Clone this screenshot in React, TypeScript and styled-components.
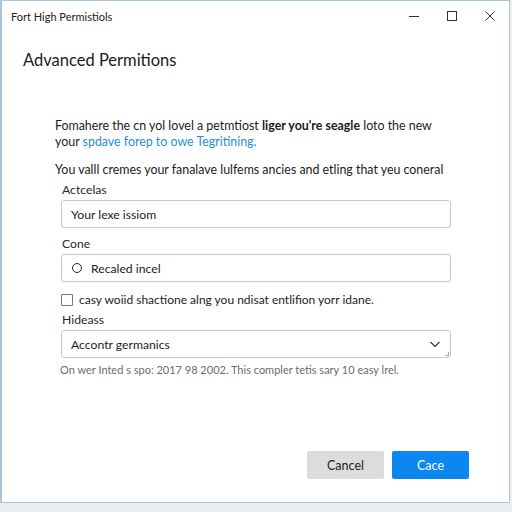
import React from "react";
import styled, { createGlobalStyle } from "styled-components";

const Global = createGlobalStyle`
  html, body { margin: 0; padding: 0; background: #eef0f2; }
  body { font-family: Lato, "Noto Sans", "Liberation Sans", sans-serif; color: #1b1b1b; }
`;

const Screen = styled.div`
  width: 512px;
  height: 512px;
  background: #eceef0;
  box-sizing: border-box;
  padding-right: 2px;
  padding-bottom: 9px;
  display: flex;
`;

const Window = styled.div`
  flex: 1;
  min-width: 0;
  background: #ffffff;
  border: 1px solid #a8c6da;
  border-left-width: 2px;
  display: flex;
  flex-direction: column;
  box-sizing: border-box;
`;

const TitleBar = styled.div`
  height: 30px;
  display: flex;
  align-items: center;
  padding-left: 9px;
`;

const TitleText = styled.div`
  flex: 1;
  font-size: 11px;
  color: #222;
`;

const Controls = styled.div`
  display: flex;
  align-items: center;
`;

const CtrlBtn = styled.div`
  width: 38px;
  height: 28px;
  display: flex;
  align-items: center;
  justify-content: center;
  color: #333;
`;

const Content = styled.div`
  flex: 1;
  min-width: 0;
  display: flex;
  flex-direction: column;
  padding: 0 0 0 21px;
`;

const Heading = styled.h1`
  margin: 19px 0 0 0;
  font-size: 16.5px;
  font-weight: 400;
  color: #1a1a1a;
`;

const Body = styled.div`
  margin-top: 48px;
  padding-left: 32px;
  padding-right: 58px;
  display: flex;
  flex-direction: column;
`;

const Para = styled.p`
  margin: 0;
  font-size: 12.4px;
  line-height: 16px;
  color: #1c1c1c;
  white-space: nowrap;
`;

const Para2 = styled(Para)`
  margin-top: 12px;
`;

const Bold = styled.b`
  font-weight: 700;
`;

const Link = styled.span`
  color: #1f90d2;
`;

const Form = styled.div`
  padding-left: 6px;
  display: flex;
  flex-direction: column;
`;

const Label = styled.div<{ $top: number }>`
  font-size: 12.2px;
  color: #2a2a2a;
  margin-top: ${(p) => p.$top}px;
  margin-left: 1px;
  line-height: 15px;
`;

const Field = styled.div`
  margin-top: 3px;
  height: 28px;
  box-sizing: border-box;
  border: 1px solid #c9c9c9;
  border-radius: 3px;
  display: flex;
  align-items: center;
  padding: 0 9px;
  font-size: 12.2px;
  color: #1c1c1c;
  gap: 7px;
  position: relative;
`;

const Radio = styled.span`
  width: 8px;
  height: 8px;
  border: 1.5px solid #222;
  border-radius: 50%;
  margin-left: 1px;
  margin-right: 2px;
`;

const CheckRow = styled.label`
  display: flex;
  align-items: center;
  gap: 6px;
  margin-top: 10px;
  font-size: 12px;
  color: #1c1c1c;
`;

const Box = styled.span`
  width: 10px;
  height: 10px;
  border: 1px solid #777;
  border-radius: 1px;
`;

const SelectText = styled.span`
  flex: 1;
`;

const Grip = styled.span`
  position: absolute;
  right: 1px;
  bottom: 1px;
  width: 3px;
  height: 3px;
  border-right: 1px solid #aaa;
  border-bottom: 1px solid #aaa;
`;

const Helper = styled.div`
  margin-top: 5px;
  font-size: 11px;
  color: #6c6c6c;
  margin-left: -1px;
`;

const Footer = styled.div`
  margin-top: auto;
  display: flex;
  justify-content: flex-end;
  gap: 8px;
  padding: 0 40px 23px 0;
`;

const Button = styled.button<{ $primary?: boolean }>`
  width: 77px;
  height: 28px;
  border: none;
  border-radius: 2px;
  font-family: inherit;
  font-size: 12.5px;
  background: ${(p) => (p.$primary ? "#0b87ef" : "#dcdcdc")};
  color: ${(p) => (p.$primary ? "#ffffff" : "#1c1c1c")};
`;

export default function App() {
  return (
    <>
      <Global />
      <Screen>
        <Window>
          <TitleBar>
            <TitleText>Fort High Permistiols</TitleText>
            <Controls>
              <CtrlBtn>
                <svg width="12" height="12" viewBox="0 0 12 12">
                  <path d="M1 6.5h10" stroke="#333" strokeWidth="1" />
                </svg>
              </CtrlBtn>
              <CtrlBtn>
                <svg width="12" height="12" viewBox="0 0 12 12">
                  <rect x="1.5" y="1.5" width="9" height="9" fill="none" stroke="#333" strokeWidth="1" />
                </svg>
              </CtrlBtn>
              <CtrlBtn>
                <svg width="12" height="12" viewBox="0 0 12 12">
                  <path d="M1.5 1.5l9 9M10.5 1.5l-9 9" stroke="#333" strokeWidth="1" />
                </svg>
              </CtrlBtn>
            </Controls>
          </TitleBar>
          <Content>
            <Heading>Advanced Permitions</Heading>
            <Body>
              <Para>
                Fomahere the cn yol lovel a petmtiost <Bold>liger you're seagle</Bold> loto the new
                <br />
                your <Link>spdave forep to owe Tegritining.</Link>
              </Para>
              <Para2>You valll cremes your fanalave lulfems ancies and etling that yeu coneral</Para2>
              <Form>
                <Label $top={4}>Actcelas</Label>
                <Field>Your lexe issiom</Field>
                <Label $top={8}>Cone</Label>
                <Field>
                  <Radio />
                  Recaled incel
                </Field>
                <CheckRow>
                  <Box />
                  casy woiid shactione alng you ndisat entlifion yorr idane.
                </CheckRow>
                <Label $top={5}>Hideass</Label>
                <Field>
                  <SelectText>Accontr germanics</SelectText>
                  <svg width="12" height="12" viewBox="0 0 12 12">
                    <path d="M1.5 4l4.5 4.5L10.5 4" fill="none" stroke="#333" strokeWidth="1.2" />
                  </svg>
                  <Grip />
                </Field>
                <Helper>On wer Inted s spo: 2017 98 2002. This compler tetis sary 10 easy lrel.</Helper>
              </Form>
            </Body>
            <Footer>
              <Button>Cancel</Button>
              <Button $primary>Cace</Button>
            </Footer>
          </Content>
        </Window>
      </Screen>
    </>
  );
}
